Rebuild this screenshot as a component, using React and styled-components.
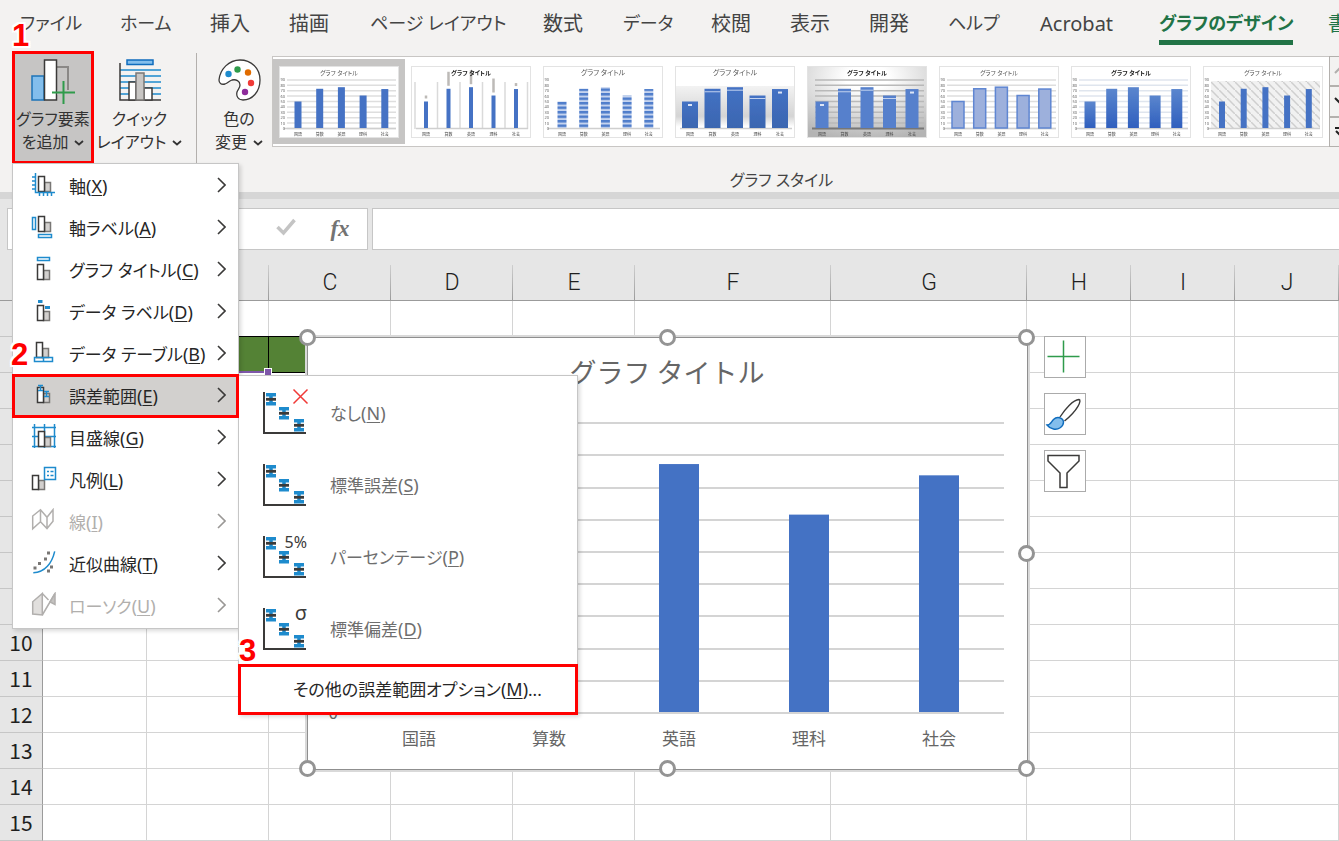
import React, { useState } from 'react'
import styled, { createGlobalStyle } from 'styled-components';

const GlobalStyle = createGlobalStyle`
  * { box-sizing: border-box; }

  body {
    margin: 0;
    background: #E6E6E6;
    font-family: 'Noto Sans', 'Noto Sans CJK JP', sans-serif;
    font-feature-settings: 'palt';
    color: #262626;
  }

  button, input {
    font: inherit;
    font-feature-settings: inherit;
    color: inherit;
  }
`;

const Window = styled.div`
  min-height: 100vh;
  overflow: hidden;
  display: flex;
  flex-direction: column;
`;

const Ribbon = styled.header`
  position: relative;
  z-index: 5;
  height: 192px;
  background: #F3F2F1;
`;

const TabBar = styled.nav`
  height: 51px;
  padding-left: 20px;
  display: flex;
`;

const Tab = styled.button`
  flex: 0 0 ${props => props.$width}px;
  height: 45px;
  padding: 0;
  border: 0;
  background: none;
  text-align: left;
  white-space: nowrap;
  font-size: ${props => props.$kana ? 18 : 20}px;
  line-height: 47px;
  color: ${props => props.$active || props.$accent ? '#217346' : '#444444'};
  font-weight: ${props => props.$active ? 700 : 400};

  span {
    display: inline-block;
    height: 45px;
    vertical-align: top;
    border-bottom: ${props => props.$active ? '5px solid #217346' : '0'};
  }
`;

const RibbonBody = styled.div`
  display: flex;
  align-items: flex-start;
  padding-left: 12px;
`;

const MenuAnchor = styled.div`
  position: relative;
  flex: none;
`;

const BigButton = styled.button`
  flex: none;
  width: ${props => props.$width}px;
  height: 113px;
  padding: ${props => props.$marked ? 4 : 7}px 0 0;
  border: ${props => props.$marked ? '3px solid #FF0000' : '0'};
  background: ${props => props.$marked ? '#C6C5C4' : 'none'};
  display: flex;
  flex-direction: column;
  align-items: center;
  white-space: nowrap;
  font-size: 16px;
  line-height: 23px;
  color: #333333;

  svg { flex: none; margin-bottom: 4px; }
  .line { display: flex; align-items: center; gap: 6px; }
  .line svg { margin: 0; }
`;

const Separator = styled.div`
  flex: none;
  width: 1px;
  height: 130px;
  margin: 2px 9px 0 11px;
  background: #B3B0AD;
`;

const StyleGroup = styled.section`
  flex: none;
  display: flex;
  flex-direction: column;
  align-items: center;

  h2 {
    margin: 0;
    padding-top: 4px;
    font-size: 16px;
    font-weight: 400;
    line-height: 24px;
    color: #444444;
  }

  .content { display: flex; height: 113px; }
`;

const Gallery = styled.div`
  flex: none;
  height: 91px;
  margin-top: 5px;
  padding: 2px 0;
  display: flex;
  background: #FFFFFF;
  border: 1px solid #C8C6C4;
  border-right: 0;
`;

const StyleTile = styled.button`
  width: 132px;
  height: 85px;
  padding: 6px;
  border: 0;
  background: ${props => props.$selected ? '#C6C5C4' : 'none'};

  svg { display: block; }
`;

const GalleryScroll = styled.div`
  flex: none;
  width: 28px;
  height: 91px;
  margin-top: 5px;
  display: flex;
  flex-direction: column;

  button {
    flex: 1;
    padding: 0 0 0 4px;
    border: 1px solid #B3B0AD;
    background: #F3F2F1;
    text-align: left;
  }
  svg { display: block; }
`;

const Callout = styled.span`
  position: absolute;
  z-index: 6;
  left: ${props => props.$left}px;
  top: ${props => props.$top}px;
  font: 700 31px/32px 'Liberation Sans', sans-serif;
  color: #FF0000;
  text-shadow: 2px 0 #FFF, -2px 0 #FFF, 0 2px #FFF, 0 -2px #FFF, 2px 2px #FFF, -2px -2px #FFF, 2px -2px #FFF, -2px 2px #FFF;
  pointer-events: none;
`;

const Menu = styled.ul`
  position: absolute;
  left: 0;
  top: 112px;
  width: 227px;
  margin: 0;
  padding: 1px 0;
  list-style: none;
  background: #FFFFFF;
  border: 1px solid #C6C6C6;
  box-shadow: 2px 2px 4px rgba(0, 0, 0, 0.15);

  li { position: relative; }
`;

const MenuItem = styled.button`
  position: relative;
  z-index: ${props => props.$open ? 2 : 0};
  width: 100%;
  height: 42px;
  padding: 0 12px 2px 18px;
  border: 0;
  display: flex;
  align-items: center;
  background: ${props => props.$open ? '#D2D0CE' : 'none'};
  outline: ${props => props.$open ? '3px solid #FF0000' : '0'};
  outline-offset: -2px;
  white-space: nowrap;
  font-size: 17px;
  color: ${props => props.disabled ? '#B1AFAD' : '#262626'};

  .label { flex: 1; margin-left: 12px; text-align: left; }
`;

const KeyHint = styled.span`
  font-size: 18px;
  line-height: 22px;

  u { text-underline-offset: 2px; text-decoration-thickness: 1px; }
`;

const SubMenu = styled.ul`
  position: absolute;
  z-index: 1;
  left: 225px;
  top: 0;
  width: 340px;
  margin: 0;
  padding: 1px 0 0;
  list-style: none;
  background: #FFFFFF;
  border: 1px solid #C6C6C6;
  box-shadow: 2px 2px 4px rgba(0, 0, 0, 0.15);
`;

const SubMenuItem = styled.button`
  width: 100%;
  height: 72px;
  padding: 0 0 2px 23px;
  border: 0;
  display: flex;
  align-items: center;
  gap: 22px;
  background: none;
  font-size: 17px;
  color: #6E6E6E;

  svg { overflow: visible; }
`;

const MoreOptions = styled(SubMenuItem)`
  height: 49px;
  padding-left: 54px;
  color: #262626;
  outline: 3px solid #FF0000;
  outline-offset: -2px;
`;

const FormulaRow = styled.div`
  padding: 9px 0 15px 7px;
  border-top: 7px solid #D6D6D6;
  background: #E6E6E6;
  display: flex;
  gap: 4px;
`;

const FormulaTools = styled.div`
  width: 361px;
  height: 42px;
  flex: none;
  display: flex;
  align-items: center;
  justify-content: flex-end;
  background: #FFFFFF;
  border: 1px solid #C6C6C6;

  input { width: 180px; border: 0; background: none; outline: 0; }

  button {
    width: 54px;
    height: 40px;
    padding: 0;
    border: 0;
    background: none;
  }

  .fx { font: italic 700 23px/38px 'Liberation Serif', serif; color: #737373; }
`;

const FormulaInput = styled.input`
  flex: 1;
  min-width: 0;
  height: 42px;
  border: 1px solid #C6C6C6;
  border-right: 0;
  background: #FFFFFF;
  outline: 0;
`;

const Sheet = styled.main`
  position: relative;
  flex: 1;
  background: #FFFFFF;
`;

const Grid = styled.table`
  width: 100%;
  table-layout: fixed;
  border-collapse: separate;
  border-spacing: 0;
  font-family: 'Noto Sans CJK JP', sans-serif;
  font-size: 21px;
  line-height: 24px;
  color: #1F1F1F;

  th, td {
    height: 36px;
    padding: 0 0 2px;
    font-weight: 400;
  }

  thead th {
    font-family: 'Roboto', sans-serif;
    font-size: 23px;
    font-weight: 300;
    padding: 0;
    background: linear-gradient(#CFCFCF, #9B9B9B) right / 1px 100% no-repeat #E6E6E6;
    border-bottom: 1px solid #9B9B9B;
  }

  tbody th {
    background: #E6E6E6;
    border-right: 1px solid #9B9B9B;
    border-bottom: 1px solid #C6C6C6;
  }

  td {
    border-right: 1px solid #D4D4D4;
    border-bottom: 1px solid #D4D4D4;
  }

  td.filled {
    background: #548235;
    border-color: #000000;
    box-shadow: 0 -1px #000000;
  }
`;

const SelectionEdge = styled.div`
  position: absolute;
  left: 43px;
  top: 106px;
  width: 228px;
  height: 2px;
  background: #7E57A9;

  &::after {
    content: '';
    position: absolute;
    right: 0;
    top: -2px;
    width: 6px;
    height: 6px;
    background: #7E57A9;
    outline: 1px solid #FFFFFF;
  }
`;

const ChartObject = styled.div`
  position: absolute;
  left: 307px;
  top: 72px;
  width: 721px;
  height: 433px;
  background: #FFFFFF;
  border: 1px solid #8F8F8F;
  outline: 2px solid #D9D9D9;

  > svg { display: block; width: 100%; height: 100%; }
`;

const Handle = styled.span`
  position: absolute;
  left: ${props => props.$x};
  top: ${props => props.$y};
  width: 17px;
  height: 17px;
  margin: -9px 0 0 -9px;
  border: 3px solid #949494;
  border-radius: 50%;
  background: #FFFFFF;
`;

const ChartTools = styled.div`
  position: absolute;
  left: 736px;
  top: -2px;
  display: flex;
  flex-direction: column;
  gap: 15px;

  button {
    width: 42px;
    height: 42px;
    padding: 0;
    border: 1px solid #ABABAB;
    background: #FFFFFF;
  }
  svg { display: block; }
`;

const tabs = [
  ['ファイル', 100], ['ホーム', 90], ['挿入', 79], ['描画', 81], ['ページ レイアウト', 173],
  ['数式', 80], ['データ', 88], ['校閲', 79], ['表示', 79], ['開発', 79], ['ヘルプ', 92],
  ['Acrobat', 119], ['グラフのデザイン', 169], ['書式', 60],
];

const menuItems = [
  { id: 'axis', text: '軸', letter: 'X' },
  { id: 'axisLabel', text: '軸ラベル', letter: 'A' },
  { id: 'title', text: 'グラフ タイトル', letter: 'C' },
  { id: 'dataLabel', text: 'データ ラベル', letter: 'D' },
  { id: 'dataTable', text: 'データ テーブル', letter: 'B' },
  { id: 'errorBars', text: '誤差範囲', letter: 'E' },
  { id: 'gridlines', text: '目盛線', letter: 'G' },
  { id: 'legend', text: '凡例', letter: 'L' },
  { id: 'lines', text: '線', letter: 'I', disabled: true },
  { id: 'trend', text: '近似曲線', letter: 'T' },
  { id: 'stock', text: 'ローソク', letter: 'U', disabled: true },
];

const errorItems = [
  { text: 'なし', letter: 'N', mark: 'none' },
  { text: '標準誤差', letter: 'S' },
  { text: 'パーセンテージ', letter: 'P', mark: '5%' },
  { text: '標準偏差', letter: 'D', mark: 'σ' },
];

const columns = [
  ['A', 104], ['B', 122], ['C', 122], ['D', 122], ['E', 122],
  ['F', 196], ['G', 196], ['H', 104], ['I', 104], ['J', 104],
];
const rows = Array.from({ length: 15 }, (_, i) => i + 1);

const scores = [
  { name: '国語', value: 50 },
  { name: '算数', value: 74 },
  { name: '英語', value: 77 },
  { name: '理科', value: 61.3 },
  { name: '社会', value: 73.5 },
];
const ticks = [0, 10, 20, 30, 40, 50, 60, 70, 80, 90];

const thumbs = [
  { bar: 7, grid: true },
  { bar: 4, vertical: true, bold: true },
  { bar: 9, striped: true, title: 8 },
  { bar: 16, shade: 'url(#softFloor)', title: 8, noAxis: true },
  { bar: 13, shade: 'url(#greyGlow)', bold: true, noAxis: true, grid: true, dark: true },
  { bar: 12, grid: true, pale: true },
  { bar: 11, grid: true, bold: true, gradient: true },
  { bar: 6, hatch: true, title: 7 },
];

// Two neighbouring columns, shared by most of the menu icons
const Pair = ({ x, y, h = 15 }) => (
  <g strokeWidth='1.5'>
    <rect x={x + 6} y={y + h - 9} width='6' height='9' fill='#D2D0CE' stroke='#797775' />
    <rect x={x} y={y} width='6' height={h} fill='#FFF' stroke='#3B3A39' />
  </g>
);

const drawings = {
  axis: (
    <>
      <Pair x={7.5} y={4.5} />
      <path d='M4.500 1V20.500H24M1 5H5M1 9H5M1 13H5M1 17H5M8.500 20V24M12.500 20V24M16.500 20V24M20.500 20V24' />
    </>
  ),
  axisLabel: (
    <>
      <Pair x={7.5} y={2.5} />
      <path d='M1.500 3.500H4.500V15.500H1.500ZM7.500 20.500H20.500V23.500H7.500Z' />
    </>
  ),
  title: (
    <>
      <Pair x={6.5} y={8.5} />
      <path d='M6.500 1.500H18.500V4.500H6.500Z' />
    </>
  ),
  dataLabel: (
    <>
      <Pair x={6.5} y={7.5} />
      <path d='M7 3.500H11.500M14 9.500H19' strokeWidth='2.800' />
    </>
  ),
  dataTable: (
    <>
      <Pair x={5.5} y={2.5} />
      <path d='M3.500 17.500H21.500V21.500H3.500ZM12.500 17V21.700' />
    </>
  ),
  errorBars: (
    <>
      <Pair x={6.5} y={5.5} />
      <path d='M7 3.500H12M7 8.500H12M9.500 3.500V8.500M13 9.500H18M13 14.500H18M15.500 9.500V14.500' />
    </>
  ),
  gridlines: (
    <>
      <path d='M3.500 0V24M13.500 0V24M23.500 0V24M1 3.500H25M1 12.500H25M1 22.500H25' />
      <Pair x={7.5} y={7.5} />
    </>
  ),
  legend: (
    <>
      <Pair x={1.5} y={9.5} h={14} />
      <path d='M13.500 1.500H24.500V13.500H13.500Z' fill='#FFF' />
      <path d='M16 5.500H18M19.500 5.500H22.500M16 9.500H18M19.500 9.500H22.500' />
    </>
  ),
  lines: (
    <path stroke='#B1AFAD' d='M1.700 8L9.500 1.700L16 9.300L22 1.700V13.300L16 20.500L9.500 13.700L1.700 20.700ZM9.500 1.700V13.700M16 9.300V20.500' />
  ),
  trend: (
    <>
      <path d='M2.300 22.700C14 22.500 21 13 23.700 1.300' />
      <path stroke='#797775' strokeWidth='3' d='M2.500 18H5.500M7 13.500H10M13 9H16M16 3H19M19 17H22M16 21H19' />
    </>
  ),
  stock: (
    <>
      <path fill='#E1DFDD' stroke='#B1AFAD' d='M1.700 9.700L11.300 1.500V23L1.700 22Z' />
      <path stroke='#B1AFAD' d='M11.300 23L24 1.500M11.300 1.500L17.500 8' />
      <path fill='#C4C2C0' stroke='#B1AFAD' d='M24 1.500V12.500L19 10Z' />
    </>
  ),
};

const MenuIcon = ({ id }) => (
  <svg width='26' height='26' viewBox='0 0 26 26' fill='none' stroke='#1E8BCD' strokeWidth='1.500'>
    {drawings[id]}
  </svg>
);

const ErrorIcon = ({ mark }) => (
  <svg width='46' height='46' viewBox='0 0 46 46' fill='none'>
    <path d='M2 3V44H44' stroke='#3B3A39' strokeWidth='2' />
    {[[4, 4], [17, 18], [32, 30]].map(([x, y]) => (
      <g key={x} transform={`translate(${x} ${y})`}>
        <path d='M0 1.800H10M0 10.800H10M5 1V11' stroke='#1E8BCD' strokeWidth='3.500' />
        <path d='M0 6.300H10' stroke='#3B3A39' strokeWidth='2.800' />
      </g>
    ))}
    {mark === 'none' && <path d='M31.500 .5L45.500 14.500M45.500 .5L31.500 14.500' stroke='#F03A37' strokeWidth='1.500' />}
    {mark && mark !== 'none' && (
      <text x='45' y='15' textAnchor='end' fontSize={mark === 'σ' ? 20 : 16} fill='#3B3A39'>{mark}</text>
    )}
  </svg>
);

const Caret = () => (
  <svg width='10' height='6' viewBox='0 0 10 6' fill='none' stroke='#333' strokeWidth='1.800'>
    <path d='M1 1L5 4.500L9 1' />
  </svg>
);

const Chevron = ({ muted }) => (
  <svg width='9' height='16' viewBox='0 0 9 16' fill='none' stroke={muted ? '#9A9896' : '#3B3A39'} strokeWidth='1.600'>
    <path d='M1 1L8 8L1 15' />
  </svg>
);

const AddElementIcon = () => (
  <svg width='46' height='46' viewBox='0 0 46 46' fill='none' strokeWidth='1.500'>
    <path d='M26 9H38V33' stroke='#8A8886' strokeWidth='2' />
    <rect x='2' y='18' width='12' height='24' fill='#83BEEC' stroke='#1E74B8' />
    <rect x='14.500' y='2' width='12' height='40' fill='#FFF' stroke='#3B3A39' />
    <path d='M33 23V46M27.500 34.500H45' stroke='#C6C5C4' strokeWidth='5' />
    <path d='M33.500 23V46M22 34.500H45' stroke='#2F9B4B' strokeWidth='2' />
  </svg>
);

const QuickLayoutIcon = () => (
  <svg width='44' height='46' viewBox='0 0 44 46' fill='none' strokeWidth='1.500'>
    <rect x='9' y='2' width='26' height='4.500' fill='#83BEEC' stroke='#0F6CBD' />
    <path d='M2 12H43M2 18H43M2 24H43M2 30H43M2 36H43' stroke='#1E8BCD' />
    <path d='M2 5V42H43' stroke='#3B3A39' />
    <rect x='11' y='24' width='7' height='18' fill='#FFF' stroke='#3B3A39' />
    <rect x='26' y='30' width='8' height='12' fill='#FFF' stroke='#3B3A39' />
    <rect x='18' y='15' width='8' height='27' fill='#C8C6C4' stroke='#797775' />
  </svg>
);

const PaletteIcon = () => (
  <svg width='43' height='46' viewBox='0 0 43 46'>
    <path
      d='M22 2C33 2 42 10 42 22C42 34 34 42 25 42C20 42 18 38 19 34C20 31 22 30 22 27C22 23 18 21 14 22C11 23 10 25 7 26C3 27 1 25 1 22C2 11 11 2 22 2Z'
      fill='#FFF' stroke='#3B3A39' strokeWidth='1.300'
    />
    <circle cx='10.500' cy='16' r='3.200' fill='#1E8BCD' />
    <circle cx='19.500' cy='11.500' r='3.200' fill='#2F9B4B' />
    <circle cx='30' cy='14.500' r='3.200' fill='#E06C00' />
    <circle cx='33' cy='25' r='3.200' fill='#F03A37' />
    <circle cx='27' cy='34' r='3.200' fill='#8E2C9B' />
  </svg>
);

const ThumbDefs = () => (
  <svg width='0' height='0' style={{ position: 'absolute' }} aria-hidden='true'>
    <defs>
      <linearGradient id='softFloor' x2='0' y2='1'>
        <stop offset='0.270' stopColor='#FFF' />
        <stop offset='0.280' stopColor='#F2F2F2' />
        <stop offset='0.700' stopColor='#D4D4D4' />
        <stop offset='0.850' stopColor='#FFF' />
      </linearGradient>
      <radialGradient id='greyGlow' cy='0.150' r='0.900'>
        <stop offset='0.200' stopColor='#FFF' />
        <stop offset='1' stopColor='#B4B4B4' />
      </radialGradient>
      <linearGradient id='blueFade' x2='0' y2='1'>
        <stop offset='0' stopColor='#5B86CE' />
        <stop offset='1' stopColor='#2F5FBE' />
      </linearGradient>
      <linearGradient id='blueDeep' x2='0' y2='1'>
        <stop offset='0' stopColor='#4472C4' />
        <stop offset='1' stopColor='#3B66B0' />
      </linearGradient>
      <pattern id='stripes' width='4' height='4.500' patternUnits='userSpaceOnUse'>
        <rect width='4' height='4.500' fill='#C5D3EE' />
        <rect width='4' height='2.500' fill='#4F7DCB' />
      </pattern>
      <pattern id='hatching' width='8' height='8' patternUnits='userSpaceOnUse'>
        <rect width='8' height='8' fill='#F1F1F1' />
        <path d='M0 0L8 8' stroke='#CFCFCF' strokeWidth='1.500' />
      </pattern>
      <filter id='soft'><feGaussianBlur stdDeviation='0.600' /></filter>
    </defs>
  </svg>
);

const Thumb = ({ bar, grid, vertical, bold, striped, shade, title = 7, noAxis, dark, pale, gradient, hatch }) => {
  const left = noAxis || vertical ? 15 : 19;
  const step = noAxis || vertical ? 22.5 : 21.7;
  const fill = striped ? 'url(#stripes)'
    : pale ? '#9DB0DC'
    : dark ? '#5680CC'
    : shade ? 'url(#blueDeep)'
    : gradient ? 'url(#blueFade)' : '#4472C4';
  return (
    <svg width='120' height='72' viewBox='0 0 120 72'>
      <rect x='0.500' y='0.500' width='119' height='71' fill={shade || '#FFF'} stroke='#E3E3E3' />
      <g filter='url(#soft)'>
        {hatch && <rect x='8' y='15' width='109' height='48' fill='url(#hatching)' />}
        {grid && ticks.map(t => (
          <path key={t} d={`M8 ${62.5 - t * 0.54}H117`} stroke={dark ? '#B9B9B9' : gradient ? '#DFE5EE' : '#DEDEDE'} strokeWidth='1.500' />
        ))}
        {vertical && [0, 1, 2, 3, 4, 5].map(i => (
          <path key={i} d={`M${4 + i * 22.5} 16V63`} stroke='#DADADA' strokeWidth='1.500' />
        ))}
        <path d='M5 62.500H117' stroke={dark ? '#777' : '#CFCFCF'} strokeWidth={dark ? 2 : 1.5} />
        {scores.map((s, i) => (
          <g key={s.name}>
            <rect
              x={left + i * step - bar / 2} y={62 - s.value * 0.53} width={bar} height={s.value * 0.53}
              fill={fill} stroke={pale ? '#5F86D2' : 'none'} strokeWidth='1.500'
            />
            {shade && i > 0 && i < 4 && <path d={`M${left + i * step - bar / 2} ${65 - s.value * 0.53}h${bar}`} stroke='#C3D2EF' />}
            {shade && (i === 0 || i === 4) && <path d={`M${left + i * step - 2} ${65.5 - s.value * 0.53}h4`} stroke='#DCE5F6' strokeWidth='2' />}
            {vertical && <path d={`M${left + i * step} ${59 - s.value * 0.53}v${i === 0 || i === 4 ? -3 : -14}`} stroke='#BDBAB7' strokeWidth='2.500' />}
            <text x={left + i * step} y='69.500' fontSize='4' textAnchor='middle' fill='#444'>{s.name}</text>
          </g>
        ))}
        {!noAxis && !vertical && ticks.map(t => (
          <text key={t} x='6' y={64 - t * 0.54} fontSize='4' textAnchor='end' fill='#666'>{t}</text>
        ))}
        <text x='60' y='9' fontSize={title - 1} textAnchor='middle' fontWeight={bold ? 700 : 400} fill={bold ? '#222' : '#555'}>グラフ タイトル</text>
      </g>
    </svg>
  );
};

const ScoreChart = () => (
  <svg viewBox='0 0 719 431' fontFamily="'Noto Sans CJK JP', sans-serif" fill='#666666'>
    {ticks.map(t => (
      <g key={t}>
        <path d={`M46 ${375 - Math.round(t * 3.22)}H696`} stroke='#D4D4D4' strokeWidth='2' />
        <text x='30' y={381 - Math.round(t * 3.22)} fontSize='17' textAnchor='end'>{t}</text>
      </g>
    ))}
    {scores.map((s, i) => (
      <g key={s.name}>
        <rect x={91 + i * 130} y={374 - s.value * 3.22} width='40' height={s.value * 3.22} fill='#4472C4' />
        <text x={111 + i * 130} y='407' fontSize='17' textAnchor='middle'>{s.name}</text>
      </g>
    ))}
    <text x='359' y='45' fontSize='27' textAnchor='middle' style={{ fontFeatureSettings: 'normal' }}>グラフ タイトル</text>
  </svg>
);

function App() {
  const [activeTab, setActiveTab] = useState('グラフのデザイン');
  const [selectedStyle, setSelectedStyle] = useState(0);

  return (
    <Window>
      <GlobalStyle />
      <ThumbDefs />
      <Ribbon>
        <TabBar>
          {tabs.map(([name, width]) => (
            <Tab
              key={name}
              $width={width}
              $kana={/[ァ-ヶ]/.test(name)}
              $active={activeTab === name}
              $accent={name === '書式'}
              onClick={() => setActiveTab(name)}
            >
              <span>{name}</span>
            </Tab>
          ))}
        </TabBar>
        <RibbonBody>
          <MenuAnchor>
            <Callout $left={0} $top={-31}>1</Callout>
            <BigButton $width={82} $marked>
              <AddElementIcon />
              <span>グラフ要素</span>
              <span className='line'>を追加 <Caret /></span>
            </BigButton>
            <Menu>
              {menuItems.map(item => (
                <li key={item.id}>
                  <MenuItem disabled={item.disabled} $open={item.id === 'errorBars'}>
                    <MenuIcon id={item.id} />
                    <span className='label'>{item.text}<KeyHint>(<u>{item.letter}</u>)</KeyHint></span>
                    <Chevron muted={item.disabled} />
                  </MenuItem>
                  {item.id === 'errorBars' && (
                    <>
                      <Callout $left={-2} $top={-36}>2</Callout>
                      <SubMenu>
                        {errorItems.map(sub => (
                          <li key={sub.letter}>
                            <SubMenuItem>
                              <ErrorIcon mark={sub.mark} />
                              <span>{sub.text}<KeyHint>(<u>{sub.letter}</u>)</KeyHint></span>
                            </SubMenuItem>
                          </li>
                        ))}
                        <li>
                          <Callout $left={0} $top={-30}>3</Callout>
                          <MoreOptions><span>その他の誤差範囲オプション<KeyHint>(<u>M</u>)</KeyHint>...</span></MoreOptions>
                        </li>
                      </SubMenu>
                    </>
                  )}
                </li>
              ))}
            </Menu>
          </MenuAnchor>
          <BigButton $width={91}>
            <QuickLayoutIcon />
            <span>クイック</span>
            <span className='line'>レイアウト <Caret /></span>
          </BigButton>
          <Separator />
          <StyleGroup>
            <div className='content'>
              <BigButton $width={66}>
                <PaletteIcon />
                <span>色の</span>
                <span className='line'>変更 <Caret /></span>
              </BigButton>
              <Gallery>
                {thumbs.map((thumb, i) => (
                  <StyleTile
                    key={i}
                    aria-label={`スタイル ${i + 1}`}
                    $selected={selectedStyle === i}
                    onClick={() => setSelectedStyle(i)}
                  >
                    <Thumb {...thumb} />
                  </StyleTile>
                ))}
              </Gallery>
              <GalleryScroll>
                {['M1 6L6 1L11 6', 'M1 1L6 6L11 1', 'M1 1H11M2 4L6 8L10 4'].map((d, i) => (
                  <button key={d} disabled={i === 0} aria-label={['上へ', '下へ', 'その他'][i]}>
                    <svg width='14' height='9' viewBox='0 0 14 9' fill='none' stroke={i === 0 ? '#B1AFAD' : '#222'} strokeWidth='2'>
                      <path d={d} />
                    </svg>
                  </button>
                ))}
              </GalleryScroll>
            </div>
            <h2>グラフ スタイル</h2>
          </StyleGroup>
        </RibbonBody>
      </Ribbon>

      <FormulaRow>
        <FormulaTools>
          <input aria-label='名前ボックス' />
          <button aria-label='キャンセル'>
            <svg width='16' height='16' viewBox='0 0 16 16' stroke='#C4C2C0' strokeWidth='3'>
              <path d='M2 2L14 14M14 2L2 14' />
            </svg>
          </button>
          <button aria-label='入力'>
            <svg width='20' height='18' viewBox='0 0 20 18' fill='none' stroke='#C4C4C4' strokeWidth='3.500'>
              <path d='M1.500 9L7.500 15L18.500 2' />
            </svg>
          </button>
          <button className='fx' aria-label='関数の挿入'>fx</button>
        </FormulaTools>
        <FormulaInput aria-label='数式バー' />
      </FormulaRow>

      <Sheet>
        <Grid>
          <colgroup>
            <col style={{ width: 43 }} />
            {columns.map(([name, width]) => <col key={name} style={{ width }} />)}
          </colgroup>
          <thead>
            <tr>
              <th />
              {columns.map(([name]) => <th key={name} scope='col'>{name}</th>)}
            </tr>
          </thead>
          <tbody>
            {rows.map(row => (
              <tr key={row}>
                <th scope='row'>{row}</th>
                {columns.map(([name]) => (
                  <td key={name} className={row === 2 && 'ABC'.includes(name) ? 'filled' : undefined} />
                ))}
              </tr>
            ))}
          </tbody>
        </Grid>
        <SelectionEdge />
        <ChartObject>
          <ScoreChart />
          {[['0%', '0%'], ['50%', '0%'], ['100%', '0%'], ['0%', '50%'], ['100%', '50%'], ['0%', '100%'], ['50%', '100%'], ['100%', '100%']].map(([x, y]) => (
            <Handle key={x + y} $x={x} $y={y} />
          ))}
          <ChartTools>
            <button aria-label='グラフ要素'>
              <svg width='40' height='40' viewBox='0 0 40 40' stroke='#2F9B4B' strokeWidth='1.500'>
                <path d='M18.500 3.500V35.500M2.500 19.500H34.500' />
              </svg>
            </button>
            <button aria-label='グラフ スタイル'>
              <svg width='40' height='40' viewBox='0 0 40 40' fill='none' strokeWidth='1.400'>
                <path d='M15 23C20 15 28 6 34 5.500C37 6 33 16 19.500 27' stroke='#3B3A39' />
                <path d='M2 31C6 31 6 28 8.500 25.500C12 22 18 23.500 18.500 28C18.500 33 13 36 8.500 35C5.500 34.500 3.500 33 2 31Z' fill='#83BEEC' stroke='#0F6CBD' />
              </svg>
            </button>
            <button aria-label='グラフ フィルター'>
              <svg width='40' height='40' viewBox='0 0 40 40' fill='none' stroke='#3B3A39' strokeWidth='1.500'>
                <path d='M3 4.500H34V10L22 22V36.500H15V22L3 10Z' />
              </svg>
            </button>
          </ChartTools>
        </ChartObject>
      </Sheet>
    </Window>
  )
}

export default App;
